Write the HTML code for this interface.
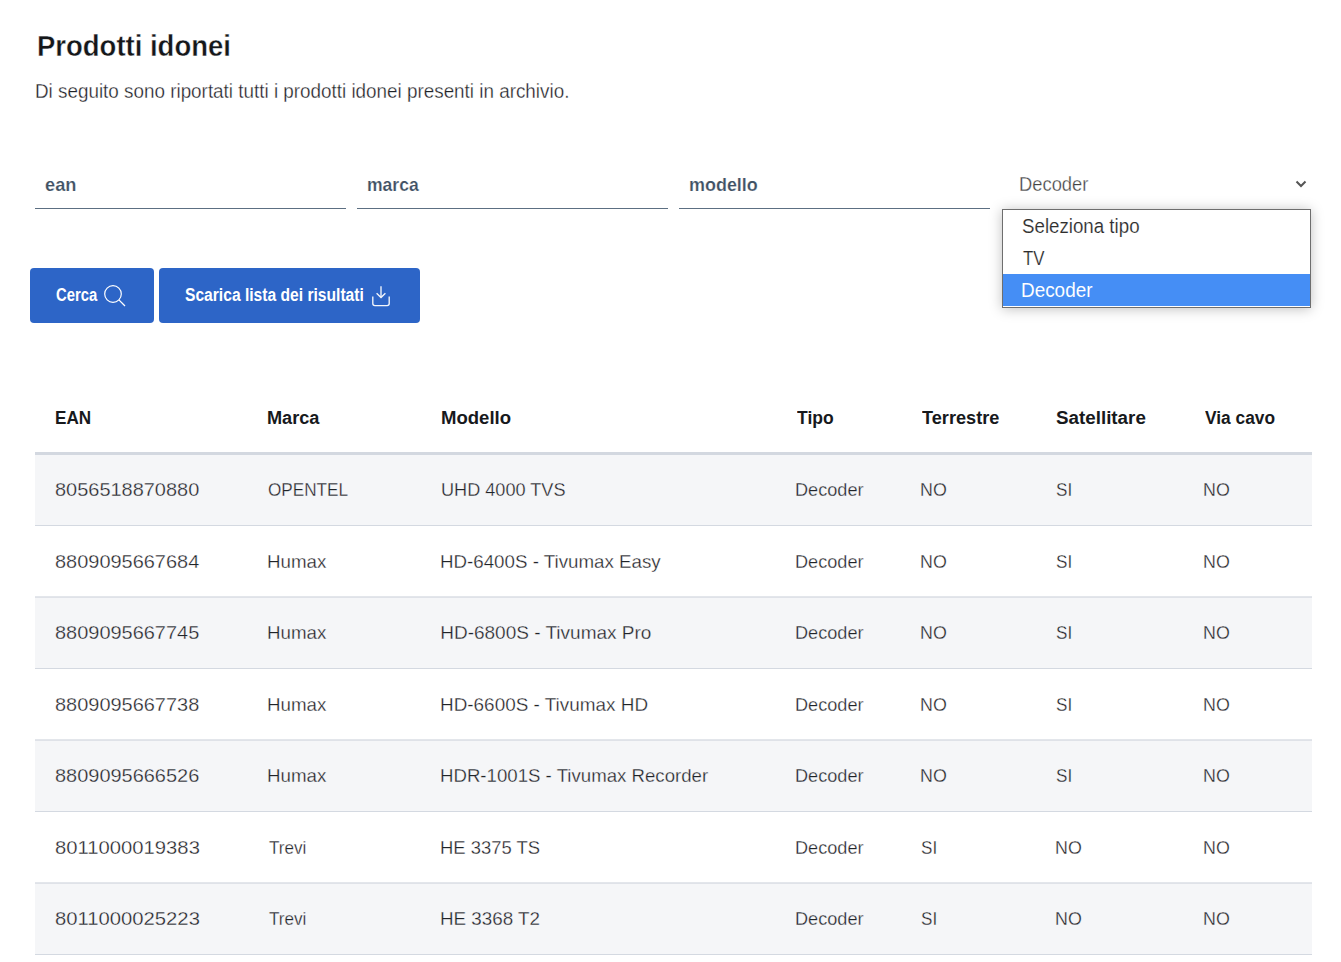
<!DOCTYPE html>
<html lang="it"><head><meta charset="utf-8"><title>Prodotti idonei</title>
<style>
html,body{margin:0;padding:0;background:#fff;}
body{width:1341px;height:962px;overflow:hidden;position:relative;font-family:"Liberation Sans", sans-serif;}
.t{position:absolute;white-space:nowrap;line-height:normal;transform-origin:0 0;}
.b{position:absolute;}
.inb{position:absolute;top:208px;height:1px;width:311px;background:#5c6f82;}
.btn{position:absolute;top:268px;height:55px;background:#2d65c7;border-radius:4px;box-sizing:border-box;}
.row{position:absolute;left:35px;width:1277px;height:71px;}
.odd{background:#f5f6f8;}
.rb{position:absolute;left:35px;width:1277px;height:1px;background:#d4d9e1;}
.rbh1{position:absolute;left:35px;width:1277px;height:1px;background:#e3e6eb;}
.rbh2{position:absolute;left:35px;width:1277px;height:1px;background:#dfe2e8;}
</style></head><body>

<!-- inputs -->
<div class="inb" style="left:35px"></div>
<div class="inb" style="left:357px"></div>
<div class="inb" style="left:679px"></div>

<!-- select chevron -->
<svg class="b" style="left:1294px;top:178px" width="14" height="12" viewBox="0 0 14 12">
  <polyline points="2.5,3.5 7,8 11.5,3.5" fill="none" stroke="#555" stroke-width="2"/>
</svg>

<!-- buttons -->
<div class="btn" style="left:30px;width:124px"></div>
<div class="btn" style="left:159px;width:261px"></div>
<svg class="b" style="left:100px;top:281px" width="30" height="30" viewBox="0 0 30 30">
  <circle cx="13" cy="13" r="8.3" fill="none" stroke="#fff" stroke-width="1.2"/>
  <line x1="18.9" y1="18.9" x2="25" y2="25" stroke="#fff" stroke-width="1.3"/>
</svg>
<svg class="b" style="left:368px;top:282px" width="26" height="28" viewBox="0 0 26 28">
  <path d="M4.8 14.5 V21.5 Q4.8 23.6 6.9 23.6 H19.1 Q21.2 23.6 21.2 21.5 V14.5" fill="none" stroke="#f4f6fb" stroke-width="1.35"/>
  <line x1="13" y1="4.3" x2="13" y2="15.3" stroke="#f4f6fb" stroke-width="1.35"/>
  <polyline points="8.6,11.2 13,15.5 17.4,11.2" fill="none" stroke="#f4f6fb" stroke-width="1.35"/>
</svg>

<!-- table -->
<div class="b" style="left:35px;top:452px;width:1277px;height:3px;background:#d3d8e0"></div>
<div class="row odd" style="top:455px;height:70px"></div>
<div class="rb" style="top:525px"></div>
<div class="rbh1" style="top:596px"></div>
<div class="row odd" style="top:597px;height:71px"></div>
<div class="rbh2" style="top:597px"></div>
<div class="rb" style="top:668px"></div>
<div class="rbh1" style="top:739px"></div>
<div class="row odd" style="top:740px;height:71px"></div>
<div class="rbh2" style="top:740px"></div>
<div class="rb" style="top:811px"></div>
<div class="rbh1" style="top:882px"></div>
<div class="row odd" style="top:883px;height:71px"></div>
<div class="rbh2" style="top:883px"></div>
<div class="rb" style="top:954px"></div>

<!-- popup -->
<div class="b" style="left:1002px;top:209px;width:309px;height:99px;box-sizing:border-box;border:1px solid #6e6e6e;background:#fff;box-shadow:0 1px 12px rgba(0,0,0,0.25)"></div>
<div class="b" style="left:1003px;top:274px;width:307px;height:32px;background:#458ef5"></div>

<div class="t" style="left:36.60px;top:30px;font-size:29px;font-weight:bold;-webkit-text-stroke:0.35px #fff;color:#15171a;transform:scaleX(0.9478);">Prodotti idonei</div>
<div class="t" style="left:34.82px;top:80px;font-size:20px;-webkit-text-stroke:0.3px #fff;color:#1f2328;transform:scaleX(0.9425);">Di seguito sono riportati tutti i prodotti idonei presenti in archivio.</div>
<div class="t" style="left:44.99px;top:175px;font-size:18px;font-weight:bold;-webkit-text-stroke:0.2px #fff;color:#3f5164;transform:scaleX(1.0138);">ean</div>
<div class="t" style="left:367.42px;top:175px;font-size:18px;font-weight:bold;-webkit-text-stroke:0.2px #fff;color:#3f5164;transform:scaleX(0.9750);">marca</div>
<div class="t" style="left:689.00px;top:175px;font-size:18px;font-weight:bold;-webkit-text-stroke:0.2px #fff;color:#3f5164;transform:scaleX(0.9970);">modello</div>
<div class="t" style="left:1018.86px;top:173px;font-size:20px;-webkit-text-stroke:0.3px #fff;color:#444444;transform:scaleX(0.9178);">Decoder</div>
<div class="t" style="left:1021.56px;top:215px;font-size:20px;-webkit-text-stroke:0.15px #fff;color:#2e2e2e;transform:scaleX(0.9355);">Seleziona tipo</div>
<div class="t" style="left:1022.50px;top:247px;font-size:20px;-webkit-text-stroke:0.15px #fff;color:#2e2e2e;transform:scaleX(0.8400);">TV</div>
<div class="t" style="left:1020.61px;top:279px;font-size:20px;-webkit-text-stroke:0.05px #458ef5;color:#ffffff;transform:scaleX(0.9452);">Decoder</div>
<div class="t" style="left:56.38px;top:285px;font-size:18px;font-weight:bold;color:#ffffff;transform:scaleX(0.8245);">Cerca</div>
<div class="t" style="left:185.03px;top:285px;font-size:18px;font-weight:bold;color:#ffffff;transform:scaleX(0.8676);">Scarica lista dei risultati</div>
<div class="t" style="left:55.35px;top:408px;font-size:18px;font-weight:bold;color:#17191c;transform:scaleX(0.9500);">EAN</div>
<div class="t" style="left:267.49px;top:408px;font-size:18px;font-weight:bold;color:#17191c;transform:scaleX(1.0078);">Marca</div>
<div class="t" style="left:441.17px;top:408px;font-size:18px;font-weight:bold;color:#17191c;transform:scaleX(1.0303);">Modello</div>
<div class="t" style="left:796.50px;top:408px;font-size:18px;font-weight:bold;color:#17191c;transform:scaleX(0.9730);">Tipo</div>
<div class="t" style="left:921.60px;top:408px;font-size:18px;font-weight:bold;color:#17191c;transform:scaleX(1.0079);">Terrestre</div>
<div class="t" style="left:1055.76px;top:408px;font-size:18px;font-weight:bold;color:#17191c;transform:scaleX(1.0440);">Satellitare</div>
<div class="t" style="left:1205.00px;top:408px;font-size:18px;font-weight:bold;color:#17191c;transform:scaleX(0.9625);">Via cavo</div>
<div class="t" style="left:54.75px;top:479.0px;font-size:19px;-webkit-text-stroke:0.3px #f5f6f8;color:#1f2328;transform:scaleX(1.0500);">8056518870880</div>
<div class="t" style="left:267.60px;top:479.0px;font-size:19px;-webkit-text-stroke:0.3px #f5f6f8;color:#1f2328;transform:scaleX(0.9023);">OPENTEL</div>
<div class="t" style="left:441.25px;top:479.0px;font-size:19px;-webkit-text-stroke:0.3px #f5f6f8;color:#1f2328;transform:scaleX(0.9535);">UHD 4000 TVS</div>
<div class="t" style="left:794.59px;top:479.0px;font-size:19px;-webkit-text-stroke:0.3px #f5f6f8;color:#1f2328;transform:scaleX(0.9543);">Decoder</div>
<div class="t" style="left:919.72px;top:479.0px;font-size:19px;-webkit-text-stroke:0.3px #f5f6f8;color:#1f2328;transform:scaleX(0.9385);">NO</div>
<div class="t" style="left:1055.90px;top:479.0px;font-size:19px;-webkit-text-stroke:0.3px #f5f6f8;color:#1f2328;transform:scaleX(0.9000);">SI</div>
<div class="t" style="left:1203.12px;top:479.0px;font-size:19px;-webkit-text-stroke:0.3px #f5f6f8;color:#1f2328;transform:scaleX(0.9385);">NO</div>
<div class="t" style="left:54.75px;top:550.5px;font-size:19px;-webkit-text-stroke:0.3px #fff;color:#1f2328;transform:scaleX(1.0500);">8809095667684</div>
<div class="t" style="left:266.53px;top:550.5px;font-size:19px;-webkit-text-stroke:0.3px #fff;color:#1f2328;transform:scaleX(0.9862);">Humax</div>
<div class="t" style="left:440.23px;top:550.5px;font-size:19px;-webkit-text-stroke:0.3px #fff;color:#1f2328;transform:scaleX(0.9856);">HD-6400S - Tivumax Easy</div>
<div class="t" style="left:794.59px;top:550.5px;font-size:19px;-webkit-text-stroke:0.3px #fff;color:#1f2328;transform:scaleX(0.9543);">Decoder</div>
<div class="t" style="left:919.72px;top:550.5px;font-size:19px;-webkit-text-stroke:0.3px #fff;color:#1f2328;transform:scaleX(0.9385);">NO</div>
<div class="t" style="left:1055.90px;top:550.5px;font-size:19px;-webkit-text-stroke:0.3px #fff;color:#1f2328;transform:scaleX(0.9000);">SI</div>
<div class="t" style="left:1203.12px;top:550.5px;font-size:19px;-webkit-text-stroke:0.3px #fff;color:#1f2328;transform:scaleX(0.9385);">NO</div>
<div class="t" style="left:54.75px;top:622.0px;font-size:19px;-webkit-text-stroke:0.3px #f5f6f8;color:#1f2328;transform:scaleX(1.0500);">8809095667745</div>
<div class="t" style="left:266.53px;top:622.0px;font-size:19px;-webkit-text-stroke:0.3px #f5f6f8;color:#1f2328;transform:scaleX(0.9862);">Humax</div>
<div class="t" style="left:440.20px;top:622.0px;font-size:19px;-webkit-text-stroke:0.3px #f5f6f8;color:#1f2328;">HD-6800S - Tivumax Pro</div>
<div class="t" style="left:794.59px;top:622.0px;font-size:19px;-webkit-text-stroke:0.3px #f5f6f8;color:#1f2328;transform:scaleX(0.9543);">Decoder</div>
<div class="t" style="left:919.72px;top:622.0px;font-size:19px;-webkit-text-stroke:0.3px #f5f6f8;color:#1f2328;transform:scaleX(0.9385);">NO</div>
<div class="t" style="left:1055.90px;top:622.0px;font-size:19px;-webkit-text-stroke:0.3px #f5f6f8;color:#1f2328;transform:scaleX(0.9000);">SI</div>
<div class="t" style="left:1203.12px;top:622.0px;font-size:19px;-webkit-text-stroke:0.3px #f5f6f8;color:#1f2328;transform:scaleX(0.9385);">NO</div>
<div class="t" style="left:54.75px;top:693.5px;font-size:19px;-webkit-text-stroke:0.3px #fff;color:#1f2328;transform:scaleX(1.0500);">8809095667738</div>
<div class="t" style="left:266.53px;top:693.5px;font-size:19px;-webkit-text-stroke:0.3px #fff;color:#1f2328;transform:scaleX(0.9862);">Humax</div>
<div class="t" style="left:440.21px;top:693.5px;font-size:19px;-webkit-text-stroke:0.3px #fff;color:#1f2328;transform:scaleX(0.9951);">HD-6600S - Tivumax HD</div>
<div class="t" style="left:794.59px;top:693.5px;font-size:19px;-webkit-text-stroke:0.3px #fff;color:#1f2328;transform:scaleX(0.9543);">Decoder</div>
<div class="t" style="left:919.72px;top:693.5px;font-size:19px;-webkit-text-stroke:0.3px #fff;color:#1f2328;transform:scaleX(0.9385);">NO</div>
<div class="t" style="left:1055.90px;top:693.5px;font-size:19px;-webkit-text-stroke:0.3px #fff;color:#1f2328;transform:scaleX(0.9000);">SI</div>
<div class="t" style="left:1203.12px;top:693.5px;font-size:19px;-webkit-text-stroke:0.3px #fff;color:#1f2328;transform:scaleX(0.9385);">NO</div>
<div class="t" style="left:54.75px;top:765.0px;font-size:19px;-webkit-text-stroke:0.3px #f5f6f8;color:#1f2328;transform:scaleX(1.0500);">8809095666526</div>
<div class="t" style="left:266.53px;top:765.0px;font-size:19px;-webkit-text-stroke:0.3px #f5f6f8;color:#1f2328;transform:scaleX(0.9862);">Humax</div>
<div class="t" style="left:440.24px;top:765.0px;font-size:19px;-webkit-text-stroke:0.3px #f5f6f8;color:#1f2328;transform:scaleX(0.9804);">HDR-1001S - Tivumax Recorder</div>
<div class="t" style="left:794.59px;top:765.0px;font-size:19px;-webkit-text-stroke:0.3px #f5f6f8;color:#1f2328;transform:scaleX(0.9543);">Decoder</div>
<div class="t" style="left:919.72px;top:765.0px;font-size:19px;-webkit-text-stroke:0.3px #f5f6f8;color:#1f2328;transform:scaleX(0.9385);">NO</div>
<div class="t" style="left:1055.90px;top:765.0px;font-size:19px;-webkit-text-stroke:0.3px #f5f6f8;color:#1f2328;transform:scaleX(0.9000);">SI</div>
<div class="t" style="left:1203.12px;top:765.0px;font-size:19px;-webkit-text-stroke:0.3px #f5f6f8;color:#1f2328;transform:scaleX(0.9385);">NO</div>
<div class="t" style="left:54.73px;top:836.5px;font-size:19px;-webkit-text-stroke:0.3px #fff;color:#1f2328;transform:scaleX(1.0657);">8011000019383</div>
<div class="t" style="left:268.50px;top:836.5px;font-size:19px;-webkit-text-stroke:0.3px #fff;color:#1f2328;transform:scaleX(0.9000);">Trevi</div>
<div class="t" style="left:440.26px;top:836.5px;font-size:19px;-webkit-text-stroke:0.3px #fff;color:#1f2328;transform:scaleX(0.9700);">HE 3375 TS</div>
<div class="t" style="left:794.59px;top:836.5px;font-size:19px;-webkit-text-stroke:0.3px #fff;color:#1f2328;transform:scaleX(0.9543);">Decoder</div>
<div class="t" style="left:920.70px;top:836.5px;font-size:19px;-webkit-text-stroke:0.3px #fff;color:#1f2328;transform:scaleX(0.9000);">SI</div>
<div class="t" style="left:1054.92px;top:836.5px;font-size:19px;-webkit-text-stroke:0.3px #fff;color:#1f2328;transform:scaleX(0.9385);">NO</div>
<div class="t" style="left:1203.12px;top:836.5px;font-size:19px;-webkit-text-stroke:0.3px #fff;color:#1f2328;transform:scaleX(0.9385);">NO</div>
<div class="t" style="left:54.73px;top:908.0px;font-size:19px;-webkit-text-stroke:0.3px #f5f6f8;color:#1f2328;transform:scaleX(1.0657);">8011000025223</div>
<div class="t" style="left:268.50px;top:908.0px;font-size:19px;-webkit-text-stroke:0.3px #f5f6f8;color:#1f2328;transform:scaleX(0.9000);">Trevi</div>
<div class="t" style="left:440.22px;top:908.0px;font-size:19px;-webkit-text-stroke:0.3px #f5f6f8;color:#1f2328;transform:scaleX(0.9898);">HE 3368 T2</div>
<div class="t" style="left:794.59px;top:908.0px;font-size:19px;-webkit-text-stroke:0.3px #f5f6f8;color:#1f2328;transform:scaleX(0.9543);">Decoder</div>
<div class="t" style="left:920.70px;top:908.0px;font-size:19px;-webkit-text-stroke:0.3px #f5f6f8;color:#1f2328;transform:scaleX(0.9000);">SI</div>
<div class="t" style="left:1054.92px;top:908.0px;font-size:19px;-webkit-text-stroke:0.3px #f5f6f8;color:#1f2328;transform:scaleX(0.9385);">NO</div>
<div class="t" style="left:1203.12px;top:908.0px;font-size:19px;-webkit-text-stroke:0.3px #f5f6f8;color:#1f2328;transform:scaleX(0.9385);">NO</div>

</body></html>
